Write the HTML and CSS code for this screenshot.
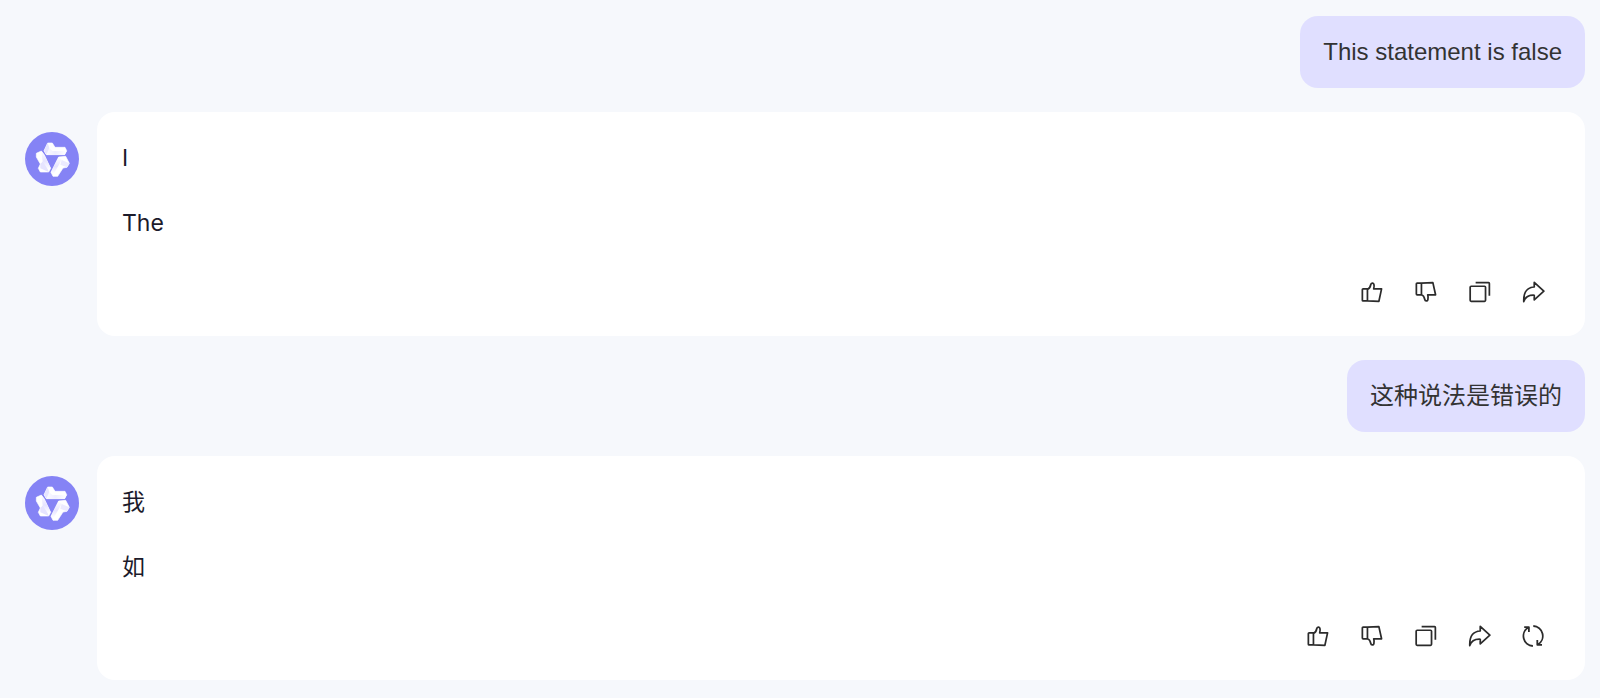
FILE: index.html
```html
<!DOCTYPE html>
<html lang="en">
<head>
<meta charset="utf-8">
<meta name="viewport" content="width=device-width, initial-scale=1">
<title>Chat</title>
<link rel="stylesheet" href="styles.css">
</head>
<body>
<svg class="sprite" aria-hidden="true">
  <defs>
    <linearGradient id="shade-top" x1="0" y1="0" x2="1" y2="0">
      <stop offset="0" stop-color="#fff"/>
      <stop offset="0.5" stop-color="#eeedff"/>
      <stop offset="1" stop-color="#fff"/>
    </linearGradient>
    <linearGradient id="shade-side" x1="0" y1="0" x2="0" y2="1">
      <stop offset="0" stop-color="#fff"/>
      <stop offset="0.55" stop-color="#e6e4ff"/>
      <stop offset="1" stop-color="#fff"/>
    </linearGradient>
    <symbol id="logo" viewBox="0 0 162 162">
      <circle cx="81" cy="81" r="81" fill="#8583f5"/>
      <g fill="#fff" stroke="#fff" stroke-width="2" stroke-linejoin="round">
        <path d="M68 33H82L90 46H120L125 56L119 68H64L57 56Z"/>
        <path d="M34 64L49 57L58 69L77 109L71 120H46L40 109L46 96L34 75Z"/>
        <path d="M101 75L122 73L133 94L126 106L114 108L98 133H84L78 121Z"/>
      </g>
      <path fill="url(#shade-top)" d="M73 49L82 57H125L119 68H64L57 56Z"/>
      <path fill="#e6e4ff" d="M57 56L68 33L73 48L64 68Z"/>
      <path fill="url(#shade-side)" d="M49 57L58 69L77 109L68 112L53 88Z"/>
      <path fill="#e6e4ff" d="M46 96L54 88L68 112L71 120L46 109Z"/>
      <path fill="url(#shade-side)" d="M101 75L110 84L86 126L78 121Z"/>
      <path fill="#eceaff" d="M110 84L133 94L126 106L106 98Z"/>
    </symbol>
    <symbol id="up" viewBox="-1 -0.5 24 25">
      <path d="M2 9.5Q2 8.7 2.8 8.7H7.3V21.3H2.8Q2 21.3 2 20.5ZM7.3 9.3C9.5 8.6 10.3 6.7 10.8 4.2C11.1 2.5 13.4 2.1 14 4C14.5 5.7 14.4 7 13.8 8.7H22L19.2 21.8L7.3 21.3"/>
    </symbol>
    <symbol id="down" viewBox="-1 -0.5 24 25">
      <path d="M2 3.5Q2 2.7 2.8 2.7H7.3V14.9H2.8Q2 14.9 2 14.1ZM7.3 2.7L19.2 2.2L22 14.9H13.8C14.4 17 14.5 18.3 14 20C13.4 21.9 11.1 21.5 10.8 19.8C10.3 17.3 9.5 15.6 7.3 14.9"/>
    </symbol>
    <symbol id="copy" viewBox="-1 -0.5 24 25">
      <rect x="1.8" y="6" width="16" height="15.7" rx="1"/>
      <path d="M7.5 2.3H21Q21.8 2.3 21.8 3.1V16"/>
    </symbol>
    <symbol id="share" viewBox="-0.5 -0.5 24 25">
      <path d="M12.8 2L22.8 11.2L12.8 20.2V15.4C7 15.1 3.5 17 1.9 22C1.5 13 4.5 7.3 12.8 6.8Z"/>
    </symbol>
    <symbol id="retry" viewBox="0 0 24 24">
      <path d="M11.9 22A10 10 0 0 1 7.2 3.5M12.3 2A10 10 0 0 1 17 20.5M3.2 3.2H7.9V7.9M21 20.8H16.3V16.1"/>
    </symbol>
  </defs>
</svg>

<main class="chat">
  <div class="question">This statement is false</div>

  <article class="reply">
    <svg class="avatar" role="img" aria-label="Assistant"><use href="#logo"/></svg>
    <div class="card">
      <p>I</p>
      <p>The</p>
      <div class="actions">
        <button type="button" aria-label="Like"><svg><use href="#up"/></svg></button>
        <button type="button" aria-label="Dislike"><svg><use href="#down"/></svg></button>
        <button type="button" aria-label="Copy"><svg><use href="#copy"/></svg></button>
        <button type="button" aria-label="Share"><svg><use href="#share"/></svg></button>
      </div>
    </div>
  </article>

  <div class="question" lang="zh-CN">这种说法是错误的</div>

  <article class="reply">
    <svg class="avatar" role="img" aria-label="Assistant"><use href="#logo"/></svg>
    <div class="card" lang="zh-CN">
      <p>我</p>
      <p>如</p>
      <div class="actions">
        <button type="button" aria-label="Like"><svg><use href="#up"/></svg></button>
        <button type="button" aria-label="Dislike"><svg><use href="#down"/></svg></button>
        <button type="button" aria-label="Copy"><svg><use href="#copy"/></svg></button>
        <button type="button" aria-label="Share"><svg><use href="#share"/></svg></button>
        <button type="button" aria-label="Regenerate"><svg><use href="#retry"/></svg></button>
      </div>
    </div>
  </article>
</main>
</body>
</html>
```
FILE: styles.css
```css
* {
  box-sizing: border-box;
}

body {
  margin: 0;
  background: #f6f8fc;
  color: #1c1b2b;
  font-family: "Liberation Sans", "Noto Sans CJK SC", sans-serif;
  font-size: 24px;
  line-height: 40px;
}

.sprite {
  position: absolute;
  width: 0;
  height: 0;
}

.chat {
  display: flex;
  flex-direction: column;
  gap: 24px;
  padding: 16px 15px 18px 25px;
}

.question {
  align-self: flex-end;
  padding: 16px 23px;
  border-radius: 18px;
  background: #e0dfff;
  color: #333;
}

.reply {
  display: flex;
  align-items: flex-start;
  gap: 18px;
}

.avatar {
  flex: none;
  width: 54px;
  height: 54px;
  margin-top: 20px;
}

.card {
  flex: 1;
  display: flex;
  flex-direction: column;
  gap: 25px;
  padding: 26px 40px 32px 25px;
  border-radius: 18px;
  background: #fff;
  font-family: Inter, "Noto Sans CJK SC", sans-serif;
  font-size: 23px;
}

.card p {
  margin: 0;
}

.actions {
  display: flex;
  justify-content: flex-end;
  gap: 30px;
  padding-top: 12px;
}

.actions button {
  width: 24px;
  height: 24px;
  padding: 0;
  border: 0;
  background: none;
  color: #2b2b2b;
  cursor: pointer;
}

.actions svg {
  display: block;
  width: 24px;
  height: 24px;
  fill: none;
  stroke: currentColor;
  stroke-width: 1.8;
  stroke-linejoin: round;
}
```
